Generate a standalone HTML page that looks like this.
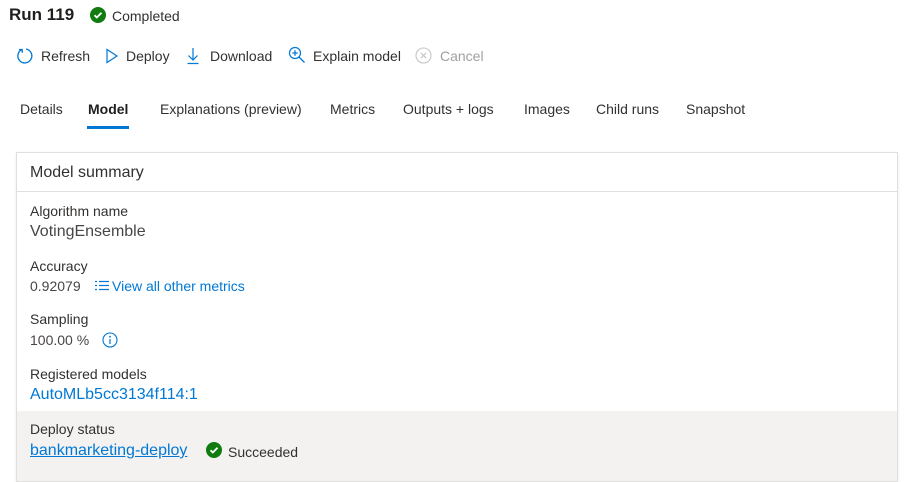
<!DOCTYPE html>
<html><head><style>
*{margin:0;padding:0;box-sizing:border-box}
body{width:913px;height:465px;overflow:hidden;background:#fff;font-family:"Segoe UI","Liberation Sans",sans-serif;color:#323130;position:relative}
.a{position:absolute;white-space:nowrap}
.blue{color:#0078d4}
</style></head><body>
<div class="a" style="left:9px;top:5px;font-size:17px;font-weight:bold;color:#201f1e">Run 119</div>
<svg class="a" style="left:90px;top:7px" width="16" height="16"><circle cx="8" cy="8" r="8" fill="#107c10"/><path d="M4.5 8.2l2.3 2.3 4.7-4.7" stroke="#fff" stroke-width="1.8" fill="none"/></svg>
<div class="a" style="left:112px;top:8px;font-size:14px">Completed</div>

<svg class="a" style="left:16px;top:47px" width="18" height="18"><path d="M6 2.5A7 7 0 1 0 10 2" stroke="#0078d4" stroke-width="1.3" fill="none"/><path d="M3 2.5h3.2v3.2" stroke="#0078d4" stroke-width="1.3" fill="none"/></svg>
<div class="a" style="left:41px;top:48px;font-size:14px">Refresh</div>
<svg class="a" style="left:105px;top:48px" width="14" height="16"><path d="M2 1.5v13l10-6.5z" stroke="#0078d4" stroke-width="1.2" fill="none"/></svg>
<div class="a" style="left:126px;top:48px;font-size:14px">Deploy</div>
<svg class="a" style="left:186px;top:47px" width="14" height="18"><path d="M7 1v12M2.5 8.5L7 13l4.5-4.5M1.5 16.5h11" stroke="#0078d4" stroke-width="1.2" fill="none"/></svg>
<div class="a" style="left:210px;top:48px;font-size:14px">Download</div>
<svg class="a" style="left:288px;top:46px" width="18" height="18"><circle cx="7" cy="7" r="5.5" stroke="#0078d4" stroke-width="1.2" fill="none"/><path d="M7 4.3v5.4M4.3 7h5.4M11 11l5.5 5.5" stroke="#0078d4" stroke-width="1.3" fill="none"/></svg>
<div class="a" style="left:313px;top:48px;font-size:14px">Explain model</div>
<svg class="a" style="left:415px;top:47px" width="17" height="17"><circle cx="8.5" cy="8.5" r="7.5" stroke="#c8c6c4" stroke-width="1.1" fill="none"/><path d="M5.8 5.8l5.4 5.4M11.2 5.8l-5.4 5.4" stroke="#c8c6c4" stroke-width="1.1"/></svg>
<div class="a" style="left:440px;top:48px;font-size:14px;color:#a19f9d">Cancel</div>

<div class="a" style="left:20px;top:101px;font-size:14px">Details</div>
<div class="a" style="left:88px;top:101px;font-size:14px;font-weight:bold;color:#201f1e">Model</div>
<div class="a" style="left:87px;top:126px;width:42px;height:3px;background:#0078d4"></div>
<div class="a" style="left:160px;top:101px;font-size:14px">Explanations (preview)</div>
<div class="a" style="left:330px;top:101px;font-size:14px">Metrics</div>
<div class="a" style="left:403px;top:101px;font-size:14px">Outputs + logs</div>
<div class="a" style="left:524px;top:101px;font-size:14px">Images</div>
<div class="a" style="left:596px;top:101px;font-size:14px">Child runs</div>
<div class="a" style="left:686px;top:101px;font-size:14px">Snapshot</div>

<div class="a" style="left:16px;top:152px;width:882px;height:330px;border:1px solid #e1dfdd;box-shadow:0 1px 3px rgba(0,0,0,.08)"></div>
<div class="a" style="left:17px;top:191px;width:880px;height:1px;background:#e1dfdd"></div>
<div class="a" style="left:17px;top:411px;width:880px;height:70px;background:#f3f2f1"></div>
<div class="a" style="left:30px;top:164px;font-size:16px">Model summary</div>
<div class="a" style="left:30px;top:203px;font-size:14px">Algorithm name</div>
<div class="a" style="left:30px;top:223px;font-size:16px;color:#484644">VotingEnsemble</div>
<div class="a" style="left:30px;top:258px;font-size:14px">Accuracy</div>
<div class="a" style="left:30px;top:278px;font-size:14px;color:#484644">0.92079</div>
<svg class="a" style="left:94px;top:280px" width="16" height="12"><path d="M1 1.5h2M1 5.5h2M1 9.5h2M5 1.5h10M5 5.5h10M5 9.5h10" stroke="#0078d4" stroke-width="1.3"/></svg>
<div class="a blue" style="left:112px;top:278px;font-size:14px">View all other metrics</div>
<div class="a" style="left:30px;top:311px;font-size:14px">Sampling</div>
<div class="a" style="left:30px;top:332px;font-size:14px;color:#484644">100.00 %</div>
<svg class="a" style="left:102px;top:332px" width="16" height="16"><circle cx="8" cy="8" r="7" stroke="#0078d4" stroke-width="1.1" fill="none"/><path d="M8 7v5" stroke="#0078d4" stroke-width="1.2"/><circle cx="8" cy="4.7" r=".9" fill="#0078d4"/></svg>
<div class="a" style="left:30px;top:366px;font-size:14px">Registered models</div>
<div class="a blue" style="left:30px;top:386px;font-size:16px">AutoMLb5cc3134f114:1</div>
<div class="a" style="left:30px;top:421px;font-size:14px">Deploy status</div>
<div class="a blue" style="left:30px;top:442px;font-size:16px;text-decoration:underline">bankmarketing-deploy</div>
<svg class="a" style="left:206px;top:442px" width="16" height="16"><circle cx="8" cy="8" r="8" fill="#107c10"/><path d="M4.5 8.2l2.3 2.3 4.7-4.7" stroke="#fff" stroke-width="1.8" fill="none"/></svg>
<div class="a" style="left:228px;top:444px;font-size:14px">Succeeded</div>
</body></html>
